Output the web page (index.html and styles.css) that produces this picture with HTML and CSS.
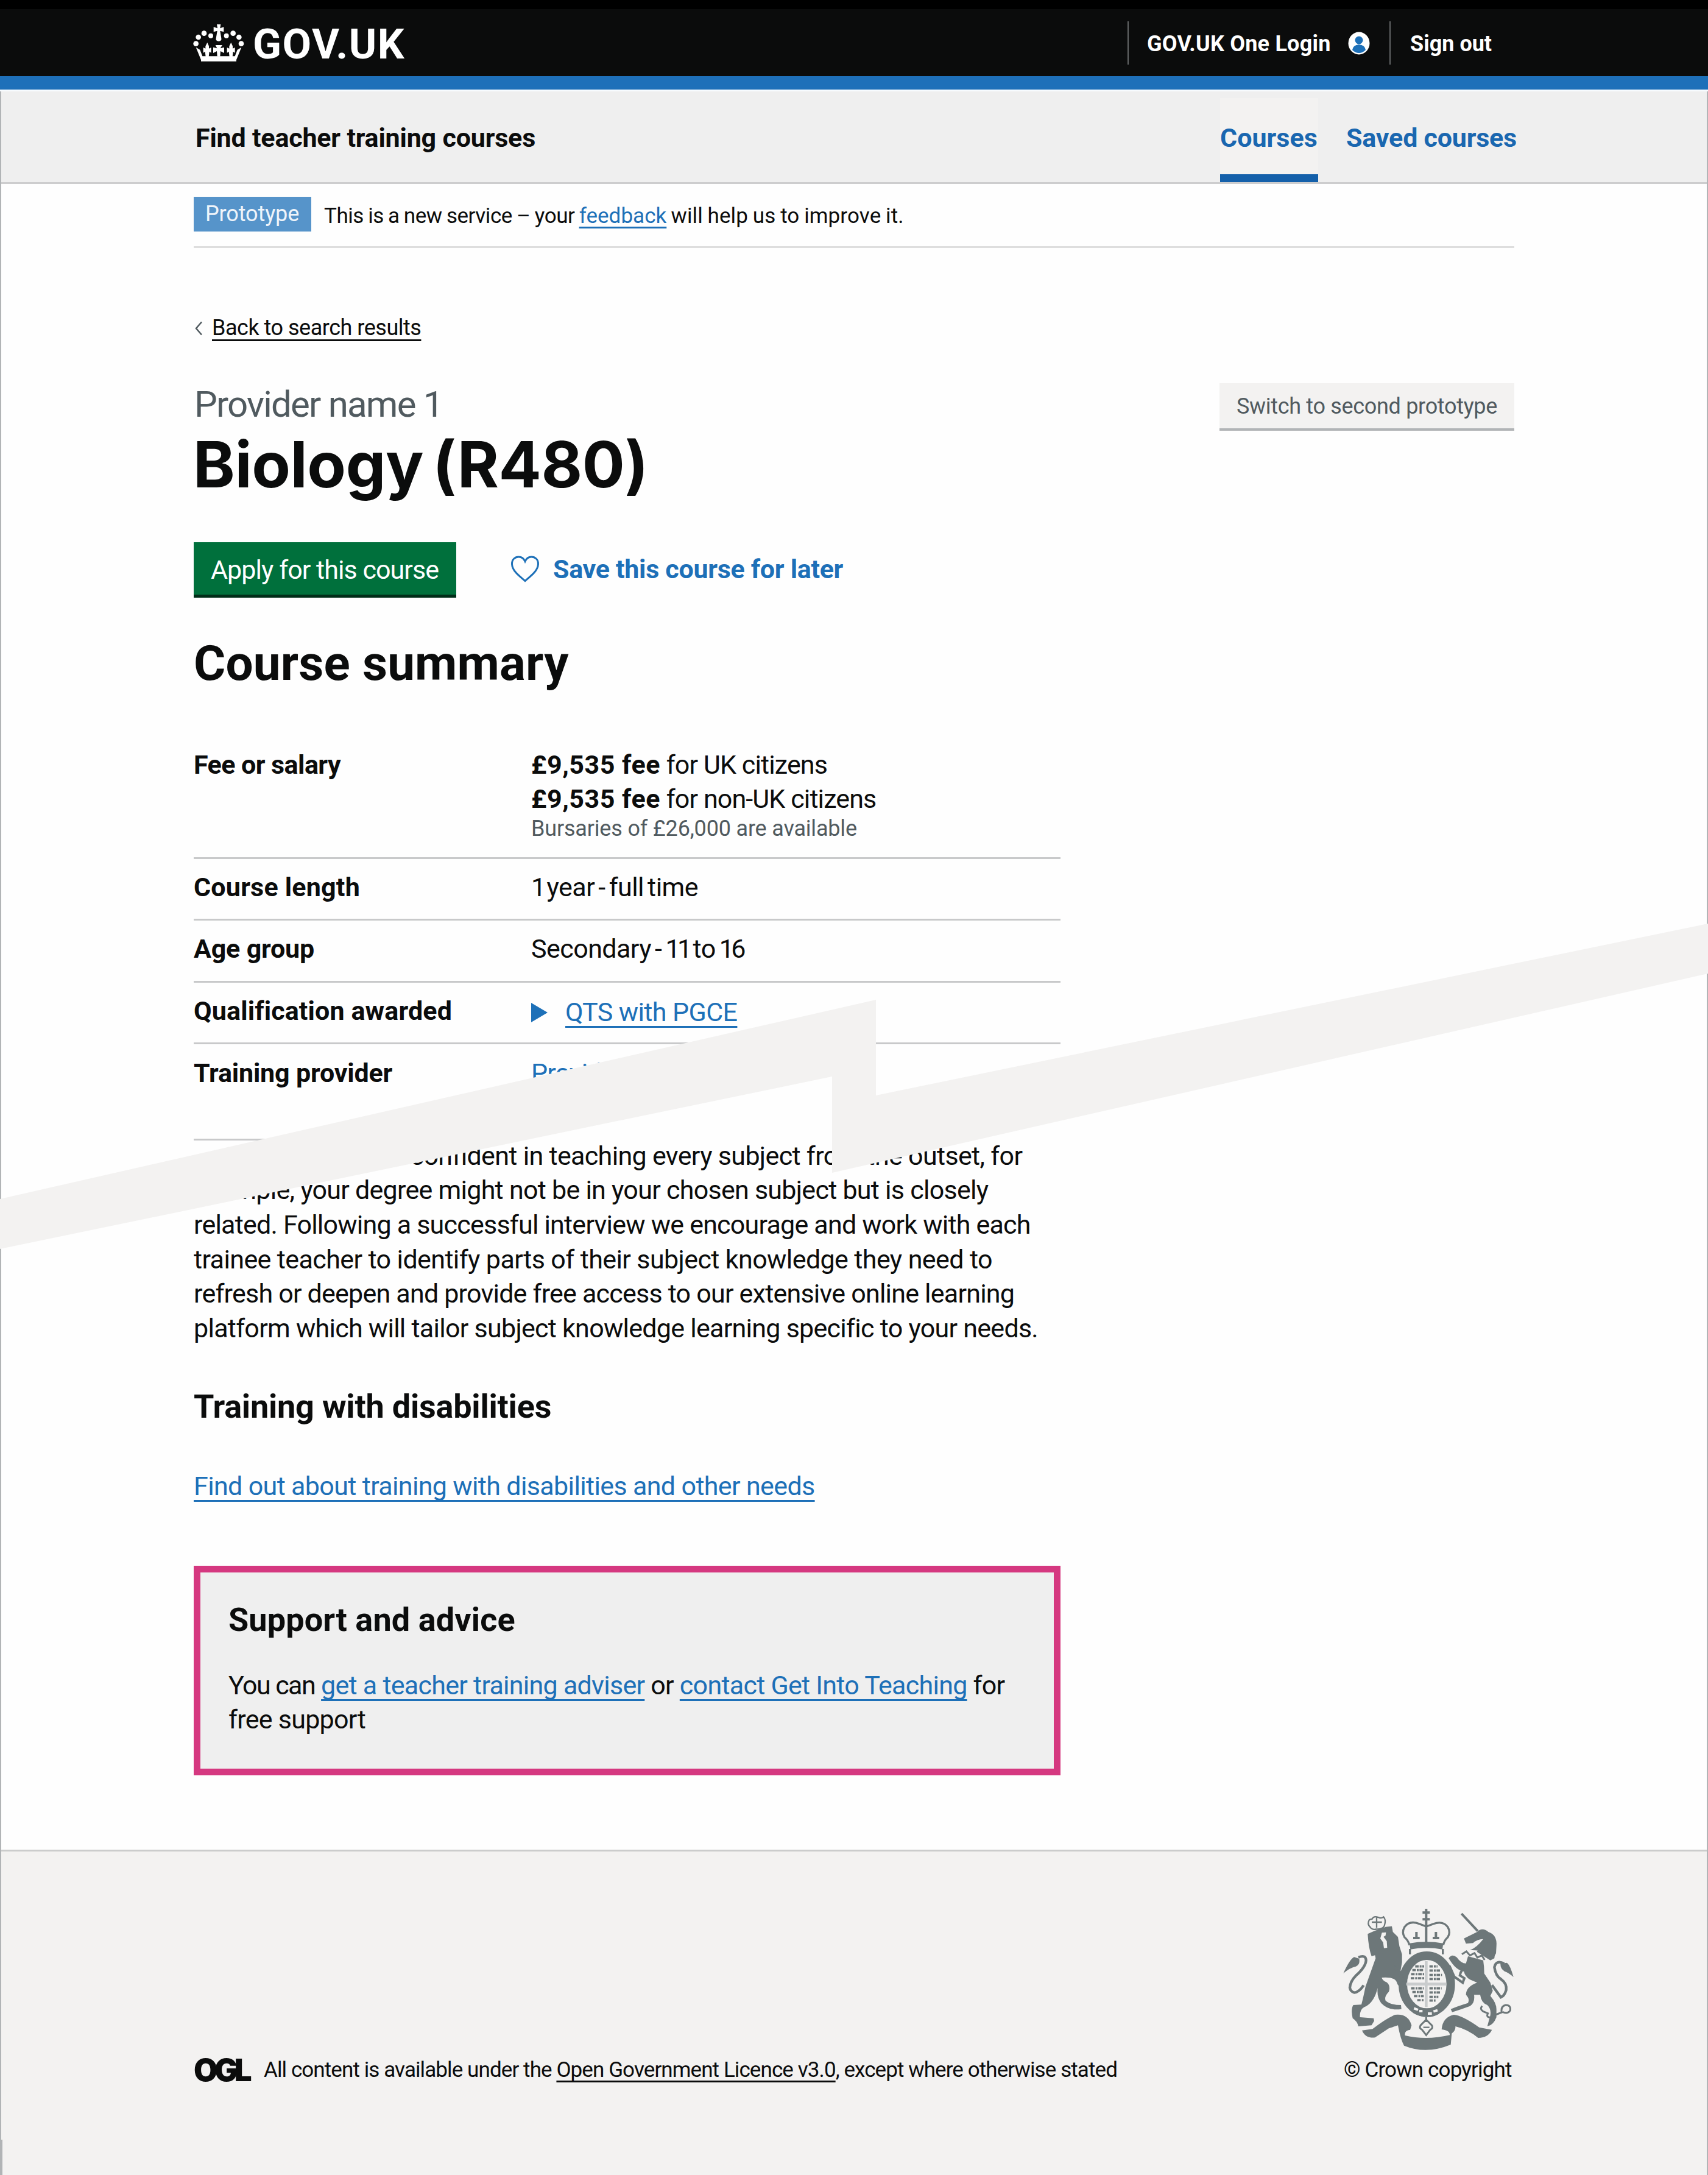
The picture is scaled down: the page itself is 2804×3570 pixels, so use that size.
FILE: index.html
```html
<!DOCTYPE html>
<html lang="en">
<head>
<meta charset="utf-8">
<title>Biology (R480) - Find teacher training courses</title>
<link rel="stylesheet" href="styles.css">
</head>
<body>
<div class="page">
  <header class="topbar">
    <div class="container topbar-row">
      <a class="brand" href="#">
        <svg class="crown" viewBox="20 25 252 183" fill="#fff" aria-hidden="true">
          <circle cx="34" cy="120" r="13"/><circle cx="46" cy="88" r="13"/><circle cx="74" cy="69" r="13"/><circle cx="107" cy="81" r="12"/>
          <circle cx="257" cy="120" r="13"/><circle cx="246" cy="88" r="13"/><circle cx="217" cy="69" r="13"/><circle cx="184" cy="81" r="12"/>
          <path d="M137 25h19l-3 19 18-6v24l-18-5 6 36q3 14-13 15-16-1-13-15l6-36-18 5V38l19 6z"/>
          <path d="M34 138l20 12 12 32h160l12-32 20-12-25 62v7H59v-7z"/>
          <path d="M90 114l8 18v12l11-5v26l-9-6-3 26H82l-3-26-9 6v-26l11 5v-12zM207 114l8 18v12l11-5v26l-9-6-3 26h-15l-3-26-9 6v-26l11 5v-12zM130 127h34l-10 16 19-5v28l-18-9-2 26h-14l-2-26-18 9v-28l19 5z"/>
        </svg>
        <span class="brand-name">GOV.UK</span>
      </a>
      <nav class="account">
        <a class="account-link login" href="#"><span class="login-text">GOV.UK One Login</span>
          <svg class="user" viewBox="0 0 36 38" aria-hidden="true"><ellipse cx="18" cy="19" rx="17.5" ry="18.5" fill="#fff"/><circle cx="18" cy="14" r="6.5" fill="#1d70b8"/><path d="M7 30q1-8 11-9 10 1 11 9-5 5-11 5T7 30z" fill="#1d70b8"/></svg>
        </a>
        <a class="account-link signout" href="#">Sign out</a>
      </nav>
    </div>
  </header>
  <div class="blue-rule"></div>
  <div class="service">
    <div class="container service-row">
      <span class="service-name">Find teacher training courses</span>
      <nav class="service-nav">
        <a class="nav-link active" href="#">Courses</a>
        <a class="nav-link saved" href="#">Saved courses</a>
      </nav>
    </div>
  </div>

  <div class="container">
    <div class="phase">
      <strong class="tag">Prototype</strong>
      <span class="phase-text">This is a new service – your <a class="link" href="#">feedback</a> <span class="phase-end">will help us to improve it.</span></span>
    </div>

    <a class="back" href="#">
      <svg class="chevron" viewBox="0 0 14 24" aria-hidden="true"><path d="M12 1.500L3 12l9 10.500" fill="none" stroke="#505a5f" stroke-width="2.500"/></svg>
      <span class="back-text">Back to search results</span>
    </a>

    <main>
      <div class="title-row">
        <h1 class="title"><span class="provider">Provider name 1</span><span class="course">Biology (R480)</span></h1>
        <a class="switch" href="#">Switch to second prototype</a>
      </div>
      <div class="actions">
        <a class="apply" href="#">Apply for this course</a>
        <a class="save" href="#">
          <svg class="heart" viewBox="0 0 48 44" aria-hidden="true"><path d="M24 41.500C14 33 3 25 2.500 14 2 6 8 2 13.500 2 18.500 2 22 5 24 9.500 26 5 29.500 2 34.500 2 40 2 46 6 45.500 14 45 25 34 33 24 41.500z" fill="none" stroke="#1d70b8" stroke-width="3"/></svg>
          <span>Save this course for later</span>
        </a>
      </div>

      <div class="two-thirds">
        <h2 class="summary-title">Course summary</h2>
        <dl class="summary">
          <div class="row fee">
            <dt class="key k-fee">Fee or salary</dt>
            <dd class="value"><b class="amount">£9,535 fee</b> for UK citizens<br><b class="amount">£9,535 fee</b> for non-UK citizens<span class="hint">Bursaries of £26,000 are available</span></dd>
          </div>
          <div class="row">
            <dt class="key k-length">Course length</dt>
            <dd class="value narrow"><span class="digits">1</span> year - full time</dd>
          </div>
          <div class="row">
            <dt class="key">Age group</dt>
            <dd class="value narrow">Secondary - <span class="digits">11</span> to <span class="digits">16</span></dd>
          </div>
          <div class="row">
            <dt class="key k-qual">Qualification awarded</dt>
            <dd class="value details"><svg class="arrow" viewBox="0 0 27 32" aria-hidden="true"><path d="M0 0l27 16L0 32z" fill="#1d70b8"/></svg><a class="link" href="#">QTS with PGCE</a></dd>
          </div>
          <div class="row last">
            <dt class="key">Training provider</dt>
            <dd class="value"><a class="link" href="#">Provider</a></dd>
          </div>
        </dl>
        <p class="body-text"><span class="line">You might not feel confident in teaching every subject from the outset, for</span> <span class="line snug">example, your degree might not be in your chosen subject but is closely</span> <span class="line tight">related. Following a successful interview we encourage and work with each</span> <span class="line loose">trainee teacher to identify parts of their subject knowledge they need to</span> <span class="line tight">refresh or deepen and provide free access to our extensive online learning</span> <span class="line snug">platform which will tailor subject knowledge learning specific to your needs.</span></p>
        <h3 class="section-title">Training with disabilities</h3>
        <p class="section-link"><a class="link" href="#">Find out about training with disabilities and other needs</a></p>
        <aside class="advice">
          <h3 class="advice-title">Support and advice</h3>
          <p class="advice-text"><span class="lead">You can</span> <a class="link" href="#">get a teacher training adviser</a> or <a class="link" href="#">contact Get Into Teaching</a> for<br>free support</p>
        </aside>
      </div>
    </main>
  </div>

  <footer class="footer">
    <div class="container footer-row">
      <div class="licence"><span class="ogl">OGL</span><span class="licence-text">All content is available under the <a class="dark-link" href="#">Open Government Licence v3.0</a>, except where otherwise stated</span></div>
      <div class="copyright">
        <svg class="arms" viewBox="75 60 840 705" fill="#6d7779" aria-hidden="true">
          <g fill="none" stroke="#6d7779" stroke-width="10">
            <path d="M402 245q-8-26-24-38-16-24 0-52 26-34 74-14 20 8 32 12 14-4 34-12 48-18 72 14 16 28 0 52-16 12-22 38"/>
            <path d="M484 66v36M466 85h36M466 118h36M484 100v140" stroke-width="12"/>
            <path d="M436 180v36M420 210h32M532 180v36M516 210h32" stroke-width="12"/>
            <path d="M404 290v-26M566 290v-26"/>
            <path d="M204 120q-12 22 4 36 10 16 32 10 28 2 38-16 10-30-4-44-12 10-26 2-22-8-30 8zM216 132h50M240 106v54" stroke-width="7"/>
            <path d="M150 305q36-14 38 14-2 34-50 76-28 28-30 60 4 20 22 24 24-2 46-36" stroke-width="13"/>
            <path d="M868 336q-40-20-48 18 6 44 34 60 28 20 24 52-8 28-26 36l-44-60" stroke-width="13"/>
            <path d="M658 90l80 86" stroke-width="12"/>
            <path d="M660 290l22-14 18 20 22-12 14 22 22-10 14 22" stroke-width="9"/>
            <path d="M760 545q-14 14 4 26l24 10q-10 18 10 20M826 588l30-12q-6-30 20-36 26 0 22 26-12 20-38 8" stroke-width="9"/>
            <path d="M484 600v24M484 612l-28 28q-8 16 8 22l20 26 20-26q16-8 8-22z" stroke-width="9"/>
            <path d="M470 650h30" stroke-width="7"/>
          </g>
          <path d="M402 236q82-14 166 0l-4 30q-78-14-158 0z"/>
          <ellipse cx="487" cy="437" rx="118" ry="140" fill="none" stroke="#6d7779" stroke-width="42"/>
          <g stroke="#6d7779" stroke-width="11" stroke-dasharray="17 5 9 4">
            <path d="M430 350h44M416 368h58M410 388h64M408 408h66M410 458h62M416 476h56M424 496h48M440 516h32"/>
            <path d="M500 350h40M500 370h56M500 392h62M500 412h52M500 458h60M500 478h56M500 500h44M500 518h30"/>
          </g>
          <path d="M484 324v226M386 437h196" stroke="#c9cccd" stroke-width="14"/>
          <path d="M408 540q76 40 146 12l-8 32q-60 34-128-6z"/>
          <path d="M424 556l20 8M450 570h16M492 582h20M520 572l20-6" stroke="#f3f2f1" stroke-width="12"/>
          <path d="M196 190L230 175 285 155 315 152 320 180 345 205 352 250 365 290 365 330 358 370 385 430 380 465Q345 455 338 425 325 400 265 405 268 420 290 428 310 445 300 475 275 500 285 520 310 540 360 540L362 560Q300 570 262 530 240 500 245 455 230 520 190 545 155 555 158 600L225 605 228 618 215 640 150 645Q145 620 122 605 112 560 125 540L165 538Q175 500 185 450L235 310 232 295 215 300Q200 260 196 190z"/>
          <path d="M222 200l22 12M266 184l20-2-2 16-10 6 16 22 2 32-16 2-4-28-14-20z" fill="#f3f2f1"/>
          <path d="M76 384q34-74 54-80l24 8q6 28-16 38-30 6-62 34zM914 402q-16-58-32-70l-32 4q-2 24 20 38 22 8 44 28z"/>
          <path d="M735 180Q760 155 790 180 835 195 830 250L828 285 815 310 795 300 765 280Q740 268 700 270 735 255 765 215 735 215 715 235L680 238 670 212 705 195z"/>
          <path d="M760 225l66 15-6 70-20 10-66-42z"/>
          <path d="M690 300L765 320Q770 350 770 385L800 430 812 470 800 495Q830 530 830 560L830 600Q815 640 785 645L800 590Q805 560 785 540 755 530 750 490L720 490Q725 530 700 545 660 560 612 575L605 560Q640 545 690 530 700 510 680 490 680 450 735 430L700 415Q675 400 670 375 630 370 595 310 610 285 635 305 655 335 680 335z"/>
          <path d="M598 346l24 54 42 30 8-22-22-14q6-30 24-30M326 350l50 74" fill="none" stroke="#6d7779" stroke-width="12"/>
          <path d="M168 665L220 658Q280 610 330 588 395 580 412 640L405 662Q375 665 380 690 484 715 600 688 602 665 560 660 565 600 620 588 660 590 745 650L808 662Q790 700 740 702 690 660 628 645 630 665 610 680L605 735Q484 785 375 740 358 710 345 640L300 655 232 700Q185 705 168 665z"/>
        </svg>
        <span class="copyright-text">© Crown copyright</span>
      </div>
    </div>
  </footer>

  <!-- Page break: a jagged band laid over the content -->
  <svg class="tear" viewBox="0 0 2804 540" aria-hidden="true"><path d="M0 456L1438 129v157L2804 4v82L1366 413V255L0 538z" fill="#f3f2f1"/></svg>
  <div class="edge edge-left"></div>
  <div class="edge edge-right"></div>
  <div class="edge edge-foot"></div>
</div>
</body>
</html>
```
FILE: styles.css
```css
* { box-sizing: border-box; }
body {
  margin: 0;
  background: #fefefe;
  color: #0b0c0c;
  font-family: Roboto, "Liberation Sans", sans-serif;
  font-size: 43px;
  line-height: 56px;
}
a { color: inherit; text-decoration: none; white-space: nowrap; }
h1, h2, h3, p, dl, dd { margin: 0; font-weight: 400; }
svg { display: block; flex: none; }
.page { position: relative; width: 2804px; height: 3570px; overflow: hidden; }
.container { width: 2168px; margin: 0 318px; }
.link {
  color: #1d70b8;
  text-decoration: underline;
  text-decoration-thickness: 3px;
  text-underline-offset: 8px;
  text-decoration-skip-ink: none;
}

/* Header */
.topbar { height: 125px; border-top: 15px solid #000; background: #0b0c0c; color: #fff; }
.topbar-row { display: flex; justify-content: space-between; height: 110px; align-items: center; }
.brand { display: flex; align-items: center; gap: 14px; }
.crown { width: 84px; height: 61px; margin-left: -1px; }
.brand-name { font-size: 69px; line-height: 69px; font-weight: 700; letter-spacing: 0.022em; padding-top: 5px; }
.account { display: flex; width: 635px; font-size: 36px; font-weight: 700; }
.account-link { display: flex; align-items: center; height: 71px; border-left: 2px solid #626566; padding-top: 4px; }
.login { width: 430px; padding-left: 30px; gap: 28px; }
.login-text { letter-spacing: 0.006em; }
.user { width: 36px; height: 38px; margin-top: -2px; }
.signout { padding-left: 32px; }
.blue-rule { height: 25px; background: #1e70b9; border-bottom: 3px solid #f7fbfe; }
.service { height: 152px; background: #efefef; border-bottom: 3px solid #cdcdce; }
.service-row { display: flex; justify-content: space-between; font-weight: 700; }
.service-name { padding: 48px 0 0 3px; letter-spacing: -0.0045em; }
.service-nav { display: flex; gap: 46px; margin-right: -4px; color: #1a67b0; }
.nav-link { height: 149px; padding-top: 48px; }
.active { width: 161px; padding: 37px 0 0 0; margin-top: 11px; height: 138px; background: #f3f2f1; border-bottom: 13px solid #1460aa; }
.saved { letter-spacing: -0.005em; }

/* Phase banner */
.phase { display: flex; height: 105px; padding-top: 21px; border-bottom: 3px solid #dedede; }
.tag { width: 193px; height: 57px; padding-left: 19px; background: #5694ca; color: #eef4fa; font-size: 36px; font-weight: 400; letter-spacing: -0.003em; }
.phase-text { margin: 4px 0 0 21px; font-size: 35px; letter-spacing: -0.013em; word-spacing: -1px; }
.phase-text .link { text-underline-offset: 6px; letter-spacing: 0.001em; }
.phase-end { letter-spacing: 0.003em; }

/* Title */
.back { display: flex; align-items: center; gap: 15px; width: 400px; height: 45px; margin-top: 109px; font-size: 36px; line-height: 45px; }
.chevron { width: 14px; height: 24px; margin-left: 1px; }
.back-text { letter-spacing: -0.0135em; text-decoration: underline; text-decoration-thickness: 3px; text-underline-offset: 7px; }
.title-row { display: flex; justify-content: space-between; align-items: flex-start; height: 261px; margin-top: 68px; }
.provider { display: block; padding-left: 1px; font-size: 60px; line-height: 70px; color: #505a5f; letter-spacing: -0.030em; }
.course { display: block; margin: 4px 0 0 -1px; font-family: Inter, Roboto, sans-serif; font-size: 104px; line-height: 118px; font-weight: 700; letter-spacing: -0.004em; word-spacing: -0.09em; }
.switch { width: 484px; height: 78px; padding: 10px 0 0 28px; background: #f3f2f1; border-bottom: 4px solid #b1b4b6; color: #505a5f; font-size: 36px; letter-spacing: -0.0088em; }
.actions { display: flex; height: 91px; }
.apply { width: 431px; height: 91px; padding: 17px 0 0 28px; background: #00703c; border-bottom: 5px solid #002d18; color: #fff; letter-spacing: -0.022em; }
.save { display: flex; align-items: center; gap: 22px; height: 88px; margin-left: 89px; color: #1d70b8; font-weight: 700; letter-spacing: -0.007em; }
.heart { width: 48px; height: 44px; }

/* Course summary */
.two-thirds { width: 1423px; }
.summary-title { margin-top: 62px; padding-top: 1px; font-size: 80px; line-height: 90px; font-weight: 700; letter-spacing: 0.002em; }
.summary { margin-top: 94px; }
.row { display: flex; height: 101.300px; padding-top: 19px; border-bottom: 3px solid #c8c9ca; line-height: 55.500px; }
.fee { height: 182px; padding-top: 0; }
.last { width: 500px; height: 158px; padding-top: 20px; }
.key { width: 554px; flex: none; font-weight: 700; letter-spacing: -0.004em; }
.k-fee { letter-spacing: -0.013em; }
.k-length { letter-spacing: 0.005em; }
.k-qual { letter-spacing: 0.003em; }
.value { letter-spacing: -0.0205em; white-space: nowrap; }
.amount { letter-spacing: 0.012em; }
.hint { display: block; padding-top: 1px; font-size: 36px; line-height: 41px; color: #505a5f; letter-spacing: -0.005em; }
.narrow { letter-spacing: -0.013em; word-spacing: -4px; }
.digits { letter-spacing: -0.11em; }
.details { display: flex; gap: 29px; letter-spacing: -0.014em; padding-top: 2px; }
.arrow { width: 27px; height: 32px; margin-top: 12px; }
.body-text { margin-top: -3px; line-height: 56.600px; letter-spacing: -0.0155em; clip-path: polygon(0 73px, 700px -74px, 100% -74px, 100% 110%, 0 110%); }
.line { display: block; white-space: nowrap; }
.line:first-child { text-indent: 10px; }
.snug { letter-spacing: -0.0170em; }
.tight { letter-spacing: -0.0182em; }
.loose { letter-spacing: -0.0140em; }
.section-title { margin-top: 67px; font-size: 54px; line-height: 68px; font-weight: 700; letter-spacing: -0.004em; }
.section-link { margin-top: 68px; letter-spacing: -0.0149em; }
.advice { height: 344px; margin-top: 103px; padding: 44px 0 0 46px; border: 11px solid #d53880; background: #efefef; }
.advice-title { font-size: 54px; line-height: 68px; font-weight: 700; letter-spacing: 0.002em; }
.advice-text { margin-top: 46px; line-height: 55.500px; letter-spacing: -0.0170em; }
.lead { letter-spacing: -0.036em; }

/* Footer */
.footer { height: 537px; margin-top: 122px; border-top: 3px solid #cbcccc; background: #f3f2f1; }
.footer-row { display: flex; justify-content: space-between; }
.licence { display: flex; padding-top: 331px; height: 400px; font-size: 35px; line-height: 56px; }
.ogl { width: 115px; font-family: Inter, Roboto, sans-serif; font-size: 51px; font-weight: 900; letter-spacing: -0.11em; }
.licence-text { letter-spacing: -0.026em; white-space: nowrap; }
.dark-link { text-decoration: underline; text-decoration-thickness: 3px; text-underline-offset: 6px; text-decoration-skip-ink: none; }
.copyright { width: 281px; padding-top: 92px; font-size: 35px; line-height: 56px; }
.arms { width: 280px; height: 235px; }
.copyright-text { display: block; margin: 4px 0 0 1px; letter-spacing: -0.024em; white-space: nowrap; }

/* Overlays */
.tear { position: absolute; left: 0; top: 1512px; width: 2804px; height: 540px; z-index: 1; }
.edge { position: absolute; width: 2px; background: #b1b4b6; }
.edge-left { left: 0; top: 150px; height: 3420px; }
.edge-right { right: 0; top: 150px; height: 3420px; }
.edge-foot { left: 0; top: 3512px; width: 4px; height: 58px; }
```
